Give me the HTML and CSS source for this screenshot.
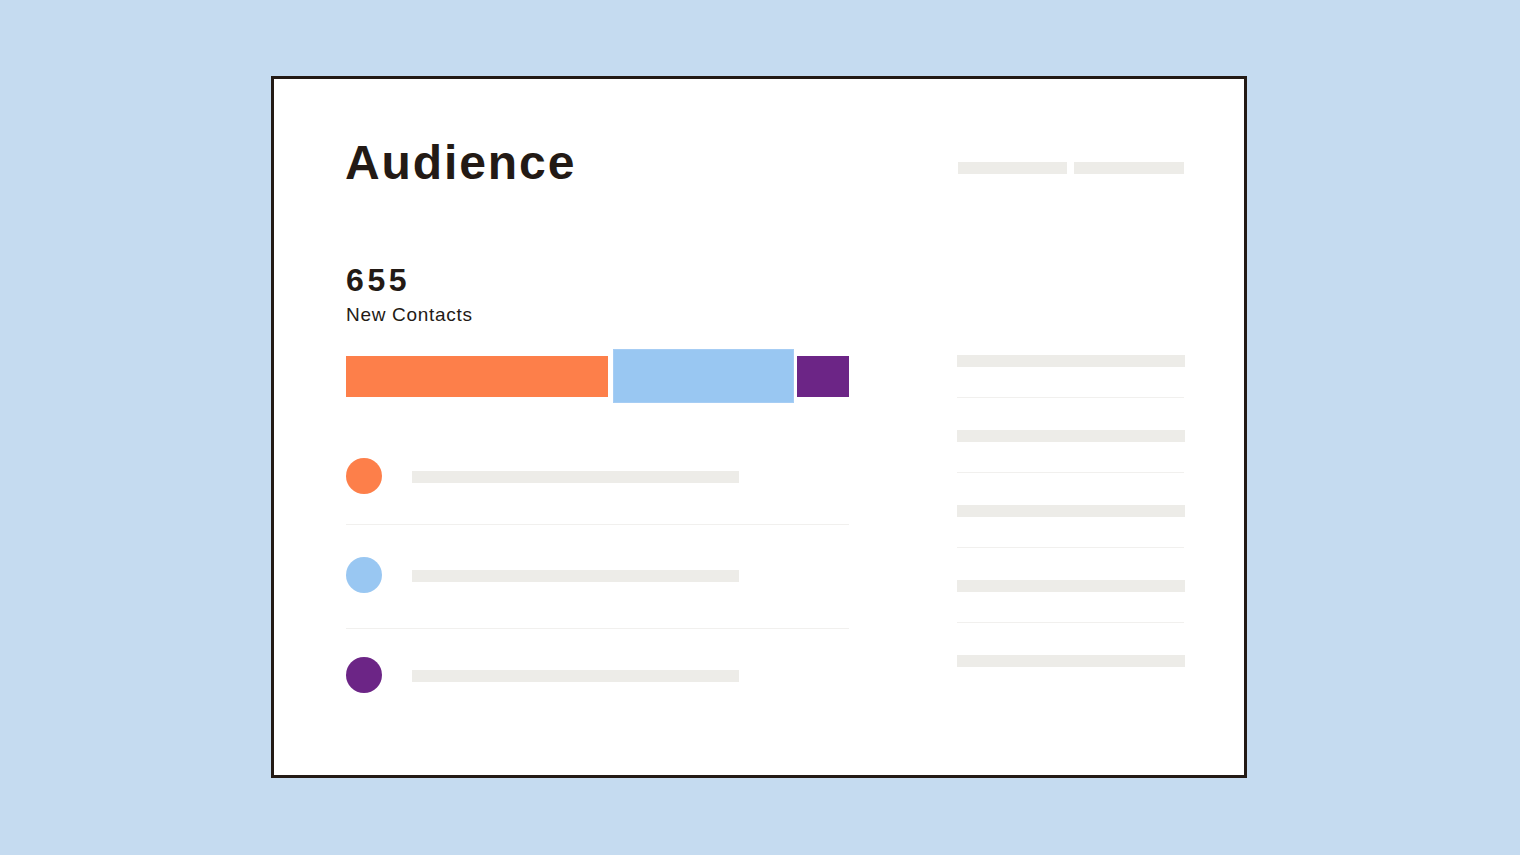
FILE: index.html
```html
<!DOCTYPE html>
<html lang="en">
<head>
<meta charset="utf-8">
<title>Audience</title>
<link rel="stylesheet" href="styles.css">
</head>
<body>
<main class="card">
  <header class="card-header">
    <h1 class="title">Audience</h1>
    <div class="header-pills">
      <span class="pill pill-a"></span>
      <span class="pill pill-b"></span>
    </div>
  </header>
  <section class="card-body">
    <div class="left-col">
      <div class="stat-value">655</div>
      <div class="stat-label">New Contacts</div>
      <div class="bar-row">
        <div class="seg seg-orange" style="width:262px"></div>
        <div class="seg seg-blue" style="width:181px"></div>
        <div class="seg seg-purple" style="width:52px"></div>
      </div>
      <ul class="legend">
        <li class="legend-row"><span class="dot dot-orange"></span><span class="legend-bar"></span></li>
        <li class="legend-row"><span class="dot dot-blue"></span><span class="legend-bar"></span></li>
        <li class="legend-row"><span class="dot dot-purple"></span><span class="legend-bar"></span></li>
      </ul>
    </div>
    <div class="right-col">
      <div class="side-row"><span class="side-bar"></span></div>
      <div class="side-row"><span class="side-bar"></span></div>
      <div class="side-row"><span class="side-bar"></span></div>
      <div class="side-row"><span class="side-bar"></span></div>
      <div class="side-row last"><span class="side-bar"></span></div>
    </div>
  </section>
</main>
</body>
</html>
```

FILE: styles.css
```css
* { box-sizing: border-box; }

html, body {
  margin: 0;
  padding: 0;
}

body {
  background: #c5dbf0;
  font-family: "Liberation Sans", Arial, sans-serif;
  color: #231a15;
  width: 1520px;
  height: 855px;
  overflow: hidden;
  padding-top: 76px;
  padding-left: 271px;
}

.card {
  width: 976px;
  height: 702px;
  background: #ffffff;
  border: 3px solid #231a15;
  padding: 60px 59px 0 72px;
  display: flex;
  flex-direction: column;
}

.card-header {
  display: flex;
  justify-content: space-between;
  align-items: flex-start;
}

.title {
  margin: 0;
  font-size: 48px;
  line-height: 48px;
  font-weight: 700;
  letter-spacing: 1.9px;
  margin-left: -1px;
}

.header-pills {
  display: flex;
  gap: 7px;
  margin-top: 23px;
  margin-right: 1px;
}

.pill {
  display: block;
  height: 12px;
  background: #edece8;
}

.pill-a { width: 109px; }
.pill-b { width: 110px; }

.card-body {
  display: flex;
  align-items: flex-start;
  justify-content: space-between;
  margin-top: 77px;
}

.left-col {
  width: 503px;
}

.stat-value {
  font-size: 32px;
  line-height: 32px;
  font-weight: 700;
  letter-spacing: 3.6px;
}

.stat-label {
  margin-top: 8px;
  font-size: 19px;
  line-height: 22px;
  letter-spacing: 0.7px;
}

.bar-row {
  display: flex;
  align-items: center;
  height: 54px;
  margin-top: 23px;
}

.seg { height: 41px; }

.seg-orange { background: #fd7f4a; margin-right: 5px; }
.seg-blue { background: #99c7f2; height: 54px; margin-right: 3px; box-shadow: inset 0 0 0 1px #a6cdf4; }
.seg-purple { background: #6c2586; }

.legend {
  list-style: none;
  margin: 23px 0 0;
  padding: 0;
}

.legend-row {
  display: flex;
  align-items: center;
  padding: 32px 0 30px;
  border-bottom: 1px solid #f1f0ee;
}

.legend-row:nth-child(2) {
  padding-bottom: 35px;
}

.legend-row:last-child {
  padding-top: 28px;
  border-bottom: none;
}

.dot {
  width: 36px;
  height: 36px;
  border-radius: 50%;
  flex: none;
}

.dot-orange { background: #fd7f4a; }
.dot-blue { background: #99c7f2; }
.dot-purple { background: #6c2586; }

.legend-bar {
  display: block;
  width: 327px;
  height: 12px;
  margin-left: 30px;
  margin-top: 2px;
  background: #edece8;
}

.right-col {
  width: 228px;
  margin-top: 91px;
}

.side-row {
  padding-bottom: 30px;
  margin-bottom: 32px;
  border-bottom: 1px solid #f1f0ee;
  margin-right: 1px;
}

.side-row.last {
  border-bottom: none;
  padding-bottom: 0;
  margin-bottom: 0;
}

.side-bar {
  display: block;
  width: 228px;
  height: 12px;
  background: #edece8;
}
```
